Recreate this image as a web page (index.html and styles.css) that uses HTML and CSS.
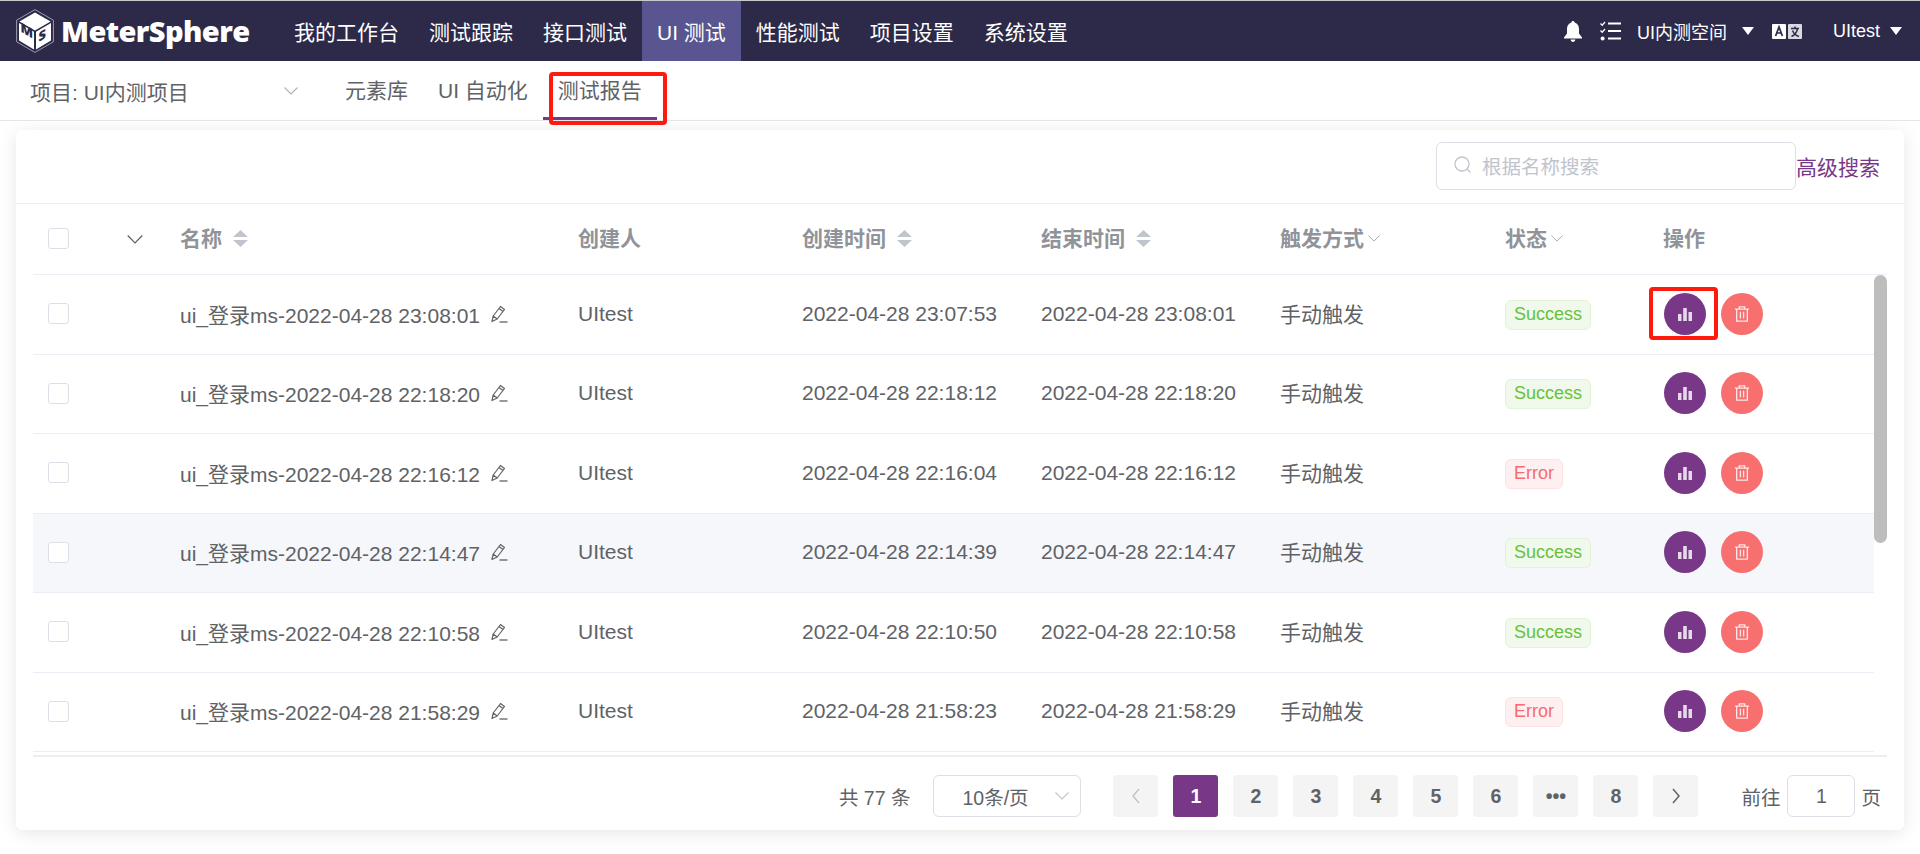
FILE: index.html
```html
<!DOCTYPE html>
<html lang="zh-CN">
<head>
    <meta charset="UTF-8">
    <title>MeterSphere</title>
    <link rel="stylesheet" href="styles.css">
</head>
<body>
    <svg class="icon-defs" width="0" height="0">
        <symbol id="i-edit" viewBox="0 0 18 18">
            <path d="M2 16.5 3.2 11 10.5 1.5 14.5 4.5 7.2 14Z M3.2 11 7.2 14 M9 3.5 13 6.5" fill="none" stroke="currentColor" stroke-width="1.2" stroke-linejoin="round"/>
            <path d="M9.5 17H17.5" stroke="currentColor" stroke-width="1.3"/>
        </symbol>
        <symbol id="i-chart" viewBox="0 0 16 16">
            <path d="M1 8H4.5V15H1Z M6.2 2H9.8V15H6.2Z M11.5 6H15V15H11.5Z" fill="currentColor"/>
        </symbol>
        <symbol id="i-trash" viewBox="0 0 18 18">
            <path d="M1 3.6H17 M6 3.4V1H12V3.4 M3 4V17H15V4 M7.2 6.5V14 M10.8 6.5V14" fill="none" stroke="currentColor" stroke-width="1.5"/>
        </symbol>
        <symbol id="i-sort" viewBox="0 0 15 17">
            <path d="M7.5 0 15 7H0Z M0 10H15L7.5 17Z" fill="currentColor"/>
        </symbol>
        <symbol id="i-down" viewBox="0 0 14 8">
            <path d="M.5.5 7 7 13.5.5" fill="none" stroke="currentColor" stroke-width="1.1"/>
        </symbol>
        <symbol id="i-caret" viewBox="0 0 12 8">
            <path d="M0 0H12L6 8Z" fill="currentColor"/>
        </symbol>
    </svg>

    <!-- 顶部导航 -->
    <header class="top-bar">
        <div class="logo">
            <svg class="logo-mark" viewBox="0 0 38 44">
                <path d="M19 .6 37.4 11.2V32.8L19 43.4.6 32.8V11.2Z" fill="none" stroke="#b9b8c8" stroke-width=".8"/>
                <path d="M19 3.4 34.6 12.4 19 21.4 3.4 12.4Z" fill="#fff"/>
                <path d="M3 14 18 22.8V40.4L3 31.6Z M35 14 20 22.8V40.4L35 31.6Z" fill="#fff"/>
                <text class="logo-m" transform="matrix(1 .58 0 1 4.4 22.6)">M</text>
                <text class="logo-s" transform="matrix(1 -.58 0 1 22.6 33)">S</text>
            </svg>
            <span class="logo-text">MeterSphere</span>
        </div>
        <nav class="main-nav">
            <a>我的工作台</a>
            <a>测试跟踪</a>
            <a>接口测试</a>
            <a class="active">UI 测试</a>
            <a>性能测试</a>
            <a>项目设置</a>
            <a>系统设置</a>
        </nav>
        <div class="top-right">
            <svg class="bell" viewBox="0 0 18 21"><path d="M9 0C10 0 10.6.7 10.6 1.6 13.6 2.4 15 5 15 8V12.5L18 16.5V17.5H0V16.5L3 12.5V8C3 5 4.4 2.4 7.4 1.6 7.4.7 8 0 9 0Z M6.6 18.6H11.4C11.2 20 10.2 21 9 21S6.800 20 6.600 18.6Z" fill="#fff"/></svg>
            <svg class="todo" viewBox="0 0 21 20"><path d="M8 2.500H21 M8 10H21 M8 17.500H21" stroke="#fff" stroke-width="2.200"/><path d="M.5 2.500 2.200 4.200 5 1 M.5 9.500 2.200 11.200 5 8" fill="none" stroke="#fff" stroke-width="1.300"/><circle cx="2.600" cy="17.500" r="2" fill="#fff"/></svg>
            <span class="workspace">UI内测空间</span>
            <svg class="caret caret-space"><use href="#i-caret"/></svg>
            <svg class="lang" viewBox="0 0 30 15">
                <rect width="14" height="15" rx="1" fill="#fff"/>
                <rect x="16" width="14" height="15" rx="1" fill="#d9d9e0"/>
                <path d="M3.600 12 7 3 10.400 12 M4.800 9H9.200" fill="none" stroke="#2c2a48" stroke-width="1.700"/>
                <path d="M19 4.600H27 M23 2.500V4.600 M25.500 4.600C25 8 22.500 11 19.500 12.500 M20.500 6.500C21.500 9 24 11.500 27 12.500" fill="none" stroke="#2c2a48" stroke-width="1.500"/>
            </svg>
            <span class="user">UItest</span>
            <svg class="caret"><use href="#i-caret"/></svg>
        </div>
    </header>

    <!-- 二级导航 -->
    <div class="sub-bar">
        <div class="project-select">
            <span>项目: UI内测项目</span>
            <svg class="chevron"><use href="#i-down"/></svg>
        </div>
        <nav class="sub-nav">
            <a>元素库</a>
            <a>UI 自动化</a>
            <a class="active">测试报告</a>
        </nav>
    </div>

    <!-- 报告列表 -->
    <main class="report-card">
        <div class="card-head">
            <div class="search-box">
                <svg class="search-icon" viewBox="0 0 18 18"><circle cx="8" cy="8" r="7" fill="none" stroke="currentColor" stroke-width="1.300"/><path d="M13 13 16.500 16.500" stroke="currentColor" stroke-width="1.300"/></svg>
                <span>根据名称搜索</span>
            </div>
            <a class="adv-search">高级搜索</a>
        </div>

        <div class="table">
            <div class="row head-row">
                <div><span class="checkbox"></span></div>
                <div><svg class="expand"><use href="#i-down"/></svg></div>
                <div>名称<svg class="sort"><use href="#i-sort"/></svg></div>
                <div>创建人</div>
                <div>创建时间<svg class="sort"><use href="#i-sort"/></svg></div>
                <div>结束时间<svg class="sort"><use href="#i-sort"/></svg></div>
                <div>触发方式<svg class="filter"><use href="#i-down"/></svg></div>
                <div>状态<svg class="filter"><use href="#i-down"/></svg></div>
                <div>操作</div>
            </div>
            <div class="table-body">
                <div class="rows">
                    <div class="row">
                        <div><span class="checkbox"></span></div><div></div>
                        <div>ui_登录ms-2022-04-28 23:08:01<svg class="edit"><use href="#i-edit"/></svg></div>
                        <div>UItest</div><div>2022-04-28 23:07:53</div><div>2022-04-28 23:08:01</div><div class="trigger">手动触发</div>
                        <div><span class="tag success">Success</span></div>
                        <div class="actions"><button class="round view"><svg><use href="#i-chart"/></svg></button><button class="round del"><svg><use href="#i-trash"/></svg></button></div>
                    </div>
                    <div class="row">
                        <div><span class="checkbox"></span></div><div></div>
                        <div>ui_登录ms-2022-04-28 22:18:20<svg class="edit"><use href="#i-edit"/></svg></div>
                        <div>UItest</div><div>2022-04-28 22:18:12</div><div>2022-04-28 22:18:20</div><div class="trigger">手动触发</div>
                        <div><span class="tag success">Success</span></div>
                        <div class="actions"><button class="round view"><svg><use href="#i-chart"/></svg></button><button class="round del"><svg><use href="#i-trash"/></svg></button></div>
                    </div>
                    <div class="row">
                        <div><span class="checkbox"></span></div><div></div>
                        <div>ui_登录ms-2022-04-28 22:16:12<svg class="edit"><use href="#i-edit"/></svg></div>
                        <div>UItest</div><div>2022-04-28 22:16:04</div><div>2022-04-28 22:16:12</div><div class="trigger">手动触发</div>
                        <div><span class="tag error">Error</span></div>
                        <div class="actions"><button class="round view"><svg><use href="#i-chart"/></svg></button><button class="round del"><svg><use href="#i-trash"/></svg></button></div>
                    </div>
                    <div class="row hover">
                        <div><span class="checkbox"></span></div><div></div>
                        <div>ui_登录ms-2022-04-28 22:14:47<svg class="edit"><use href="#i-edit"/></svg></div>
                        <div>UItest</div><div>2022-04-28 22:14:39</div><div>2022-04-28 22:14:47</div><div class="trigger">手动触发</div>
                        <div><span class="tag success">Success</span></div>
                        <div class="actions"><button class="round view"><svg><use href="#i-chart"/></svg></button><button class="round del"><svg><use href="#i-trash"/></svg></button></div>
                    </div>
                    <div class="row">
                        <div><span class="checkbox"></span></div><div></div>
                        <div>ui_登录ms-2022-04-28 22:10:58<svg class="edit"><use href="#i-edit"/></svg></div>
                        <div>UItest</div><div>2022-04-28 22:10:50</div><div>2022-04-28 22:10:58</div><div class="trigger">手动触发</div>
                        <div><span class="tag success">Success</span></div>
                        <div class="actions"><button class="round view"><svg><use href="#i-chart"/></svg></button><button class="round del"><svg><use href="#i-trash"/></svg></button></div>
                    </div>
                    <div class="row">
                        <div><span class="checkbox"></span></div><div></div>
                        <div>ui_登录ms-2022-04-28 21:58:29<svg class="edit"><use href="#i-edit"/></svg></div>
                        <div>UItest</div><div>2022-04-28 21:58:23</div><div>2022-04-28 21:58:29</div><div class="trigger">手动触发</div>
                        <div><span class="tag error">Error</span></div>
                        <div class="actions"><button class="round view"><svg><use href="#i-chart"/></svg></button><button class="round del"><svg><use href="#i-trash"/></svg></button></div>
                    </div>
                </div>
                <div class="scroll-track"><div class="scroll-thumb"></div></div>
            </div>
        </div>

        <div class="pager">
            <span class="total">共 77 条</span>
            <div class="size-select">
                <span>10条/页</span>
                <svg class="chevron"><use href="#i-down"/></svg>
            </div>
            <div class="pages">
                <span class="page disabled"><svg viewBox="0 0 10 16"><path d="M8 1 2 8 8 15" fill="none" stroke="currentColor" stroke-width="1.500"/></svg></span>
                <span class="page current">1</span>
                <span class="page">2</span>
                <span class="page">3</span>
                <span class="page">4</span>
                <span class="page">5</span>
                <span class="page">6</span>
                <span class="page">•••</span>
                <span class="page">8</span>
                <span class="page"><svg viewBox="0 0 10 16"><path d="M2 1 8 8 2 15" fill="none" stroke="currentColor" stroke-width="1.500"/></svg></span>
            </div>
            <div class="jump">
                <span>前往</span>
                <span class="jump-input">1</span>
                <span>页</span>
            </div>
        </div>
    </main>

    <!-- 红框标注 -->
    <div class="mark mark-tab"></div>
    <div class="mark mark-btn"></div>
</body>
</html>
```

FILE: styles.css
```css
:root {
    --primary-color: #783887;
    --header-color: #2c2a48;
    --text-color: #606266;
    --line-color: #ebeef5;
}

* {
    box-sizing: border-box;
}

body {
    margin: 0;
    height: 854px;
    overflow: hidden;
    position: relative;
    background: #fff;
    border-top: 1px solid #c9c9c9;
    color: var(--text-color);
    font-family: "Liberation Sans", "Noto Sans CJK SC", sans-serif;
    font-size: 21px;
}

svg {
    display: block;
}

.icon-defs {
    position: absolute;
}

/* 顶部导航 */
.top-bar {
    display: flex;
    align-items: center;
    height: 60px;
    background: var(--header-color);
    color: #fff;
}

.logo {
    display: flex;
    align-items: center;
    width: 279px;
    padding-left: 16px;
}

.logo-mark {
    width: 38px;
    height: 44px;
    flex: none;
}

.logo-m,
.logo-s {
    font-family: "Open Sans", sans-serif;
    font-size: 13px;
    font-weight: 800;
    fill: var(--header-color);
}

.logo-text {
    margin-left: 7px;
    font-family: "Open Sans", sans-serif;
    font-size: 29px;
    font-weight: 800;
    letter-spacing: -0.6px;
    line-height: 44px;
}

.main-nav {
    display: flex;
    height: 100%;
}

.main-nav a {
    display: flex;
    align-items: center;
    padding: 0 15px;
}

.main-nav a.active {
    background: #595591;
}

.top-right {
    display: flex;
    align-items: center;
    margin-left: auto;
    font-size: 18px;
}

.bell {
    width: 18px;
    height: 21px;
}

.todo {
    width: 21px;
    height: 20px;
    margin-left: 18px;
}

.workspace {
    margin-left: 16px;
}

.caret {
    width: 12px;
    height: 8px;
    margin: 0 18px 0 10px;
}

.caret-space {
    margin: 0 0 0 15px;
}

.lang {
    width: 30px;
    height: 15px;
    margin: 0 31px 0 18px;
}

/* 二级导航 */
.sub-bar {
    display: flex;
    height: 60px;
    border-bottom: 1px solid #e4e7ed;
}

.project-select {
    display: flex;
    align-items: center;
    justify-content: space-between;
    width: 270px;
    margin-left: 28px;
    padding-left: 2px;
}

.chevron {
    width: 14px;
    height: 8px;
    color: #aeb1b8;
}

.sub-nav {
    display: flex;
    margin-left: 32px;
}

.sub-nav a {
    display: flex;
    align-items: center;
    padding: 0 15px;
    height: 59px;
    border-bottom: 3px solid transparent;
}

.sub-nav a.active {
    border-bottom-color: var(--primary-color);
}

/* 报告卡片 */
.report-card {
    margin: 9px 16px 0;
    height: 700px;
    border-radius: 6px;
    background: #fff;
    box-shadow: 0 3px 18px rgba(0, 0, 0, 0.1);
}

.card-head {
    display: flex;
    align-items: flex-start;
    justify-content: flex-end;
    height: 74px;
    padding: 12px 24px 0 0;
    border-bottom: 1px solid var(--line-color);
}

.search-box {
    display: flex;
    align-items: center;
    width: 360px;
    height: 48px;
    padding: 0 0 2px 17px;
    border: 1px solid #dcdfe6;
    border-radius: 6px;
    color: #c0c4cc;
    font-size: 19.5px;
}

.search-icon {
    width: 18px;
    height: 18px;
    margin-right: 10px;
}

.adv-search {
    line-height: 52px;
    color: var(--primary-color);
}

/* 表格 */
.table {
    margin: 0 17px;
}

.row {
    display: grid;
    grid-template-columns: 147px 398px 224px 239px 239px 225px 158px 1fr;
    height: 79.5px;
    padding-bottom: 1px;
    border-bottom: 1px solid var(--line-color);
}

.row > div {
    display: flex;
    align-items: center;
    white-space: nowrap;
}

.row > div:first-child {
    padding-left: 15px;
    grid-column: 1;
}

.row > div:nth-child(2) {
    display: none;
}

.row > .trigger {
    padding-bottom: 2px;
}

.head-row {
    height: 71px;
    color: #909399;
    font-weight: 700;
}

.head-row > div:nth-child(n+3) {
    padding-bottom: 3px;
}

.head-row > div:nth-child(2) {
    display: flex;
    position: absolute;
    left: 127px;
    height: 70px;
}

.expand {
    width: 16px;
    height: 9px;
    color: #606266;
}

.sort {
    width: 15px;
    height: 17px;
    margin: 2px 0 0 11px;
    color: #c0c4cc;
}

.filter {
    width: 12px;
    height: 7px;
    margin: 2px 0 0 4px;
    color: #a6a9ad;
}

.checkbox {
    display: block;
    width: 21px;
    height: 21px;
    border: 1px solid #dcdfe6;
    border-radius: 3px;
    background: #fff;
}

.edit {
    width: 18px;
    height: 18px;
    margin-left: 10px;
    color: #606266;
}

.table-body {
    display: flex;
    height: 482px;
    overflow: hidden;
    border-bottom: 2px solid var(--line-color);
}

.rows {
    width: 1841px;
    flex: none;
}

.row.hover {
    background: #f5f7fb;
}

.scroll-track {
    width: 13px;
}

.scroll-thumb {
    height: 268px;
    border-radius: 7px;
    background: #bdbdbd;
}

.tag {
    height: 30px;
    margin-top: 2px;
    padding: 0 8px;
    border: 1px solid;
    border-radius: 6px;
    font-size: 18px;
    line-height: 27px;
}

.tag.success {
    color: #67c23a;
    background: #f0f9eb;
    border-color: #e1f3d8;
}

.tag.error {
    color: #f56c6c;
    background: #fef0f0;
    border-color: #fde2e2;
}

.actions {
    gap: 15px;
    padding-left: 1px;
}

.round {
    display: flex;
    align-items: center;
    justify-content: center;
    width: 42px;
    height: 42px;
    padding: 0;
    border: none;
    border-radius: 50%;
    color: #fff;
}

.round svg {
    width: 16px;
    height: 16px;
}

.round.view {
    background: var(--primary-color);
    color: #e6d9ea;
}

.round.del {
    background: #f76f6f;
    color: #fde6e6;
}

/* 分页 */
.pager {
    display: flex;
    align-items: center;
    justify-content: flex-end;
    padding: 18px 23px 0 0;
    font-size: 19.5px;
}

.size-select {
    display: flex;
    align-items: center;
    justify-content: space-between;
    width: 148px;
    height: 42px;
    margin-left: 23px;
    padding: 0 11px 0 28px;
    border: 1px solid #dcdfe6;
    border-radius: 6px;
}

.size-select .chevron {
    color: #c0c4cc;
}

.pages {
    display: flex;
    gap: 15px;
    margin-left: 32px;
}

.page {
    display: flex;
    align-items: center;
    justify-content: center;
    width: 45px;
    height: 42px;
    border-radius: 3px;
    background: #f4f4f5;
    font-weight: 700;
}

.page svg {
    width: 10px;
    height: 16px;
}

.page.disabled {
    color: #c0c4cc;
}

.page.current {
    background: var(--primary-color);
    color: #fff;
}

.jump {
    display: flex;
    align-items: center;
    margin-left: 43px;
    gap: 6px;
}

.jump-input {
    width: 68px;
    height: 42px;
    margin-left: 1px;
    border: 1px solid #dcdfe6;
    border-radius: 6px;
    line-height: 40px;
    text-align: center;
}

/* 红框标注 */
.mark {
    position: absolute;
    border: 4px solid #ff1a0e;
    border-radius: 4px;
}

.mark-tab {
    left: 549px;
    top: 71px;
    width: 118px;
    height: 53px;
}

.mark-btn {
    left: 1649px;
    top: 286px;
    width: 69px;
    height: 53px;
}
```
